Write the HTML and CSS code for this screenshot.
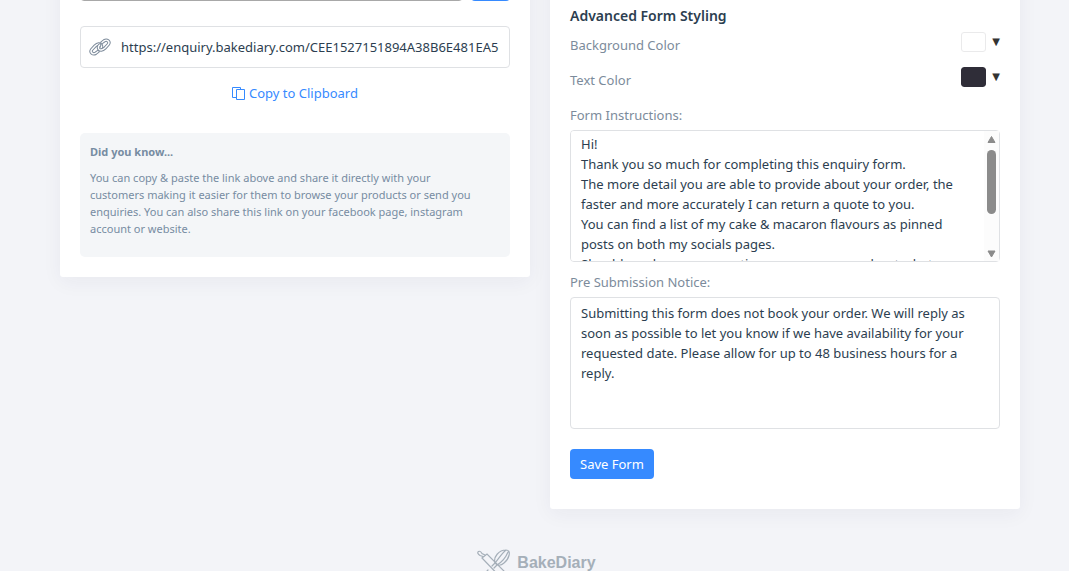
FILE: index.html
```html
<!DOCTYPE html>
<html lang="en">
<head>
<meta charset="utf-8">
<meta name="viewport" content="width=device-width, initial-scale=1">
<title>BakeDiary</title>
<link rel="stylesheet" href="styles.css">
</head>
<body>
<main class="columns">
  <section class="card share">
    <div class="picker">
      <select class="picker-select" aria-label="Form"><option></option></select>
      <button class="button picker-button" type="button" aria-label="Go"></button>
    </div>
    <div class="link-field">
      <svg class="link-icon" viewBox="0 0 22 18" aria-hidden="true">
        <defs>
          <path id="hook" d="M9 13.500 6.800 15.200C4 17 .8 14.400 2.600 11.700L6 8C8.500 5.600 11.300 5.300 12.300 7.300 13 9 12.300 10.200 11.300 11"/>
        </defs>
        <g fill="none" stroke-linecap="round">
          <g stroke="#7d8b9b" stroke-width="3.400"><use href="#hook"/></g>
          <g stroke="#fff" stroke-width="1.400"><use href="#hook"/></g>
          <g transform="rotate(180 11 9)">
            <g stroke="#7d8b9b" stroke-width="3.400"><use href="#hook"/></g>
            <g stroke="#fff" stroke-width="1.400"><use href="#hook"/></g>
          </g>
        </g>
      </svg>
      <input class="link-input" type="text" aria-label="Enquiry link" readonly value="https://enquiry.bakediary.com/CEE1527151894A38B6E481EA5C27">
    </div>
    <button class="copy" type="button">
      <svg class="copy-icon" viewBox="0 0 13 13" aria-hidden="true"><path d="M4.500 10.500H.5V.5H8.500V2.500M4.500 2.500H12.500V12.500H4.500Z" fill="none" stroke="currentColor"/></svg>
      Copy to Clipboard
    </button>
    <aside class="tip">
      <h2 class="tip-title">Did you know...</h2>
      <p class="tip-text">You can copy &amp; paste the link above and share it directly with your customers making it easier for them to browse your products or send you enquiries. You can also share this link on your facebook page, instagram account or website.</p>
    </aside>
  </section>

  <form class="card styling">
    <h2 class="heading">Advanced Form Styling</h2>
    <div class="color-row">
      <label for="bg">Background Color</label>
      <span class="color-control"><input class="swatch" id="bg" type="color" value="#ffffff"><span class="arrow">▼</span></span>
    </div>
    <div class="color-row">
      <label for="fg">Text Color</label>
      <span class="color-control"><input class="swatch" id="fg" type="color" value="#2f2d38"><span class="arrow">▼</span></span>
    </div>
    <label class="field-label" for="instructions">Form Instructions:</label>
    <div class="area-wrap">
      <textarea class="area scrolling" id="instructions">Hi!
Thank you so much for completing this enquiry form.
The more detail you are able to provide about your order, the faster and more accurately I can return a quote to you.
You can find a list of my cake &amp; macaron flavours as pinned posts on both my socials pages.
Should you have any questions, or are unsure about what you would like, please get in touch.

You can contact me at any time.

I look forward to hearing from you.

Thank you</textarea>
      <svg class="scrollbar" viewBox="0 0 15 130" aria-hidden="true">
        <path d="M0 0H15V130H0Z" fill="#fcfcfc"/>
        <g fill="#8b8b8b" stroke="#8b8b8b" stroke-linejoin="round">
          <path d="M7.500 5.500 11 11.500H4Z"/>
          <path d="M7.500 126 11 120H4Z"/>
        </g>
        <rect x="3" y="19" width="9" height="64" rx="4.500" fill="#8b8b8b"/>
      </svg>
    </div>
    <label class="field-label" for="notice">Pre Submission Notice:</label>
    <div class="area-wrap">
      <textarea class="area" id="notice">Submitting this form does not book your order. We will reply as soon as possible to let you know if we have availability for your requested date. Please allow for up to 48 business hours for a reply.</textarea>
    </div>
    <button class="button save" type="submit">Save Form</button>
  </form>
</main>
<footer class="footer">
  <svg class="logo" viewBox="0 0 34 34" aria-hidden="true">
    <g fill="none" stroke="#a5afb9" stroke-width="1.200" stroke-linecap="round">
      <path d="M5 9 10 5 33 28 28 33Z"/>
      <path d="M6 7.500 3 6.500Q-.5 4 1.500 2.500 3.500 1.500 5 4.500L8 6"/>
      <path d="M18 14C16 8 22 1 29 1 35 1 32 10 27 14 24 17 20 17 18 14ZM18 14C21 11 24 5 29 1M20 16C25 13 29 8 31 3M18 14 15 17M20 16 17 19"/>
      <path d="M11 21 2 31M14 24 5 33"/>
    </g>
  </svg>
  <span class="brand">BakeDiary</span>
</footer>
</body>
</html>
```
FILE: styles.css
```css
* { box-sizing: border-box; }

body {
  margin: 0;
  background: #f3f4f8;
  color: #2c3e50;
  font: 13px/20px "Noto Sans", "Open Sans", sans-serif;
  overflow: hidden;
}

button, input, textarea, select { font: inherit; color: inherit; }
h2, p { margin: 0; }

.columns {
  display: grid;
  grid-template-columns: 1fr 1fr;
  gap: 20px;
  align-items: start;
  margin-top: -40px;
  padding: 0 49px 0 60px;
}

.card {
  display: flex;
  flex-direction: column;
  background: #fff;
  border-radius: 3px;
  box-shadow: 0 5px 20px rgba(46, 47, 80, 0.05);
}

.share { padding: 11px 20px 20px; }

.picker { display: flex; gap: 8px; }
.picker-select {
  flex: 1;
  height: 30px;
  background: #fff;
  border: 1px solid #a8a8a8;
  border-radius: 4px;
}
.picker-button { width: 39px; }

.button {
  height: 30px;
  padding: 0 10px;
  border: 0;
  border-radius: 4px;
  background: #368aff;
  color: #fff;
}

.link-field {
  display: flex;
  align-items: center;
  gap: 10px;
  margin-top: 25px;
  padding: 0 10px 0 8px;
  height: 42px;
  border: 1px solid #dfe1e4;
  border-radius: 4px;
}
.link-icon { flex: none; width: 22px; height: 18px; }
.link-input {
  flex: 1;
  min-width: 0;
  padding: 0;
  border: 0;
  background: none;
  outline: 0;
}

.copy {
  display: flex;
  align-items: center;
  align-self: center;
  gap: 4px;
  margin-top: 15px;
  padding: 0;
  border: 0;
  background: none;
  color: #368aff;
}
.copy-icon { width: 13px; height: 13px; }

.tip {
  margin-top: 30px;
  padding: 10px 35px 20px 10px;
  border-radius: 5px;
  background: #f4f6f8;
  color: #778ca2;
  font-size: 11px;
  line-height: 17px;
}
.tip-title { font-size: 11px; line-height: 17px; }
.tip-text { margin-top: 9px; }

.styling { padding: 46px 20px 30px; color: #7c8b9b; }
.heading { color: #2c3e50; font-size: 14px; line-height: 20px; font-weight: 600; }

.color-row {
  display: flex;
  justify-content: space-between;
  align-items: center;
  height: 20px;
  margin-top: 9px;
}
.color-row + .color-row { margin-top: 15px; }
.color-control { display: flex; align-items: center; gap: 6px; margin-bottom: 6px; }
.swatch {
  width: 25px;
  height: 20px;
  padding: 0;
  border: 0;
  border-radius: 3px;
  background: none;
  appearance: none;
  overflow: hidden;
}
.swatch::-webkit-color-swatch-wrapper { padding: 0; }
.swatch::-webkit-color-swatch { border: 1px solid rgba(46, 47, 60, 0.1); border-radius: 3px; }
.arrow { color: #333; font: 10px/20px "DejaVu Sans", sans-serif; }

.field-label { margin-top: 10px; }
.color-row + .field-label { margin-top: 15px; }

.area-wrap { position: relative; margin-top: 5px; }
.area {
  display: block;
  width: 100%;
  height: 132px;
  padding: 5px 10px;
  border: 1px solid #dfe1e4;
  border-radius: 4px;
  background: #fff;
  color: #2c3e50;
  resize: none;
  outline: 0;
}
.scrolling { padding: 3px 25px 3px 10px; scrollbar-width: none; }
.scrollbar {
  position: absolute;
  top: 1px;
  right: 1px;
  width: 15px;
  height: 130px;
  pointer-events: none;
}

.save { align-self: flex-start; margin-top: 20px; }

.footer {
  display: flex;
  justify-content: center;
  gap: 6px;
  margin-top: 40px;
  padding-left: 4px;
}
.logo { width: 34px; height: 34px; }
.brand {
  padding-top: 4px;
  color: #a5afb9;
  font: bold 16px/20px "Liberation Sans", sans-serif;
}
```
